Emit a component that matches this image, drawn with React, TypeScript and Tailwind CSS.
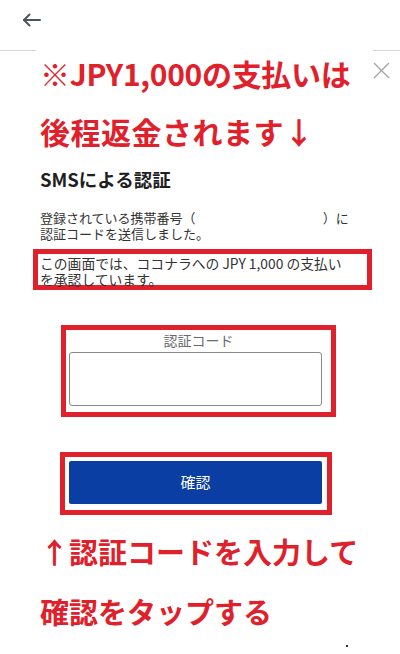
import React from "react";

const RED = "text-[#e0202a]";

export default function App() {
  return (
    <div className="w-[400px] h-[654px] bg-white overflow-hidden font-['Noto_Sans_CJK_JP','Noto_Sans',sans-serif] text-[#222]">
      {/* header */}
      <div className="h-[50px] pt-[13px] pl-[22px]">
        <svg width="19" height="14" viewBox="0 0 19 14" fill="none" stroke="#4b5560" strokeWidth="2" strokeLinecap="round" strokeLinejoin="round">
          <path d="M18 7H2" />
          <path d="M7.5 1.5 2 7l5.5 5.5" />
        </svg>
      </div>
      <div className="flex h-px">
        <div className="w-[36px] bg-[#d4d4d4]" />
        <div className="flex-1" />
        <div className="w-[27px] bg-[#d4d4d4]" />
      </div>

      {/* annotation top */}
      <div className="flex justify-between pl-[40px] pr-[10px]">
        <div className={`h-[44px] flex items-center text-[30px] font-bold tracking-[-0.3px] ${RED}`}>
          ※JPY1,000の支払いは
        </div>
        <svg className="mt-[11px]" width="17" height="17" viewBox="0 0 17 17" fill="none" stroke="#a3a3a3" strokeWidth="1.3">
          <path d="M1 1l15 15M16 1 1 16" />
        </svg>
      </div>
      <div className={`mt-[14px] h-[44px] pl-[40px] flex items-center text-[30px] font-bold tracking-[0.5px] ${RED}`}>
        後程返金されます↓
      </div>

      {/* heading */}
      <div className="mt-[14px] pl-[40px] text-[18.5px] leading-[24px] font-semibold text-[#1f1f1f]">
        SMSによる認証
      </div>

      {/* body */}
      <div className="mt-[19px] pl-[40px] text-[13px] leading-[16px] text-[#333]">
        <div className="flex">
          <span>登録されている携帯番号（</span>
          <span className="w-[127px]" />
          <span>）に</span>
        </div>
        <div>認証コードを送信しました。</div>
      </div>

      {/* red box 1 */}
      <div className="mt-[7px] ml-[33px] w-[339px] h-[41px] border-[5px] border-[#e0202a] pl-[2px] pt-[1px] text-[13.8px] leading-[16px] text-[#333]">
        <div className="whitespace-nowrap">この画面では、ココナラへの JPY 1,000 の支払い</div>
        <div>を承認しています。</div>
      </div>

      {/* auth code */}
      <div className="mt-[35px] ml-[61px] w-[275px] border-[5px] border-[#e0202a] pt-[1px] pb-[6px]">
        <div className="text-center text-[14px] leading-[18px] text-[#6b6b6b]">認証コード</div>
        <div className="mt-[3px] ml-[3px] w-[253px] h-[54px] border-[1.5px] border-[#8a8a8a] rounded-[3px]" />
      </div>

      {/* button */}
      <div className="mt-[35px] ml-[60px] w-[272px] h-[63px] border-[5px] border-[#e0202a] pt-[4px] pl-[4px]">
        <div className="w-[253px] h-[43px] bg-[#0a3ea3] rounded-[2px] flex items-center justify-center text-white text-[15px]">
          確認
        </div>
      </div>

      {/* annotation bottom */}
      <div className={`mt-[15px] h-[44px] pl-[40px] flex items-center text-[29px] font-bold ${RED}`}>
        ↑認証コードを入力して
      </div>
      <div className={`mt-[16px] h-[44px] pl-[40px] flex items-center text-[29px] font-bold ${RED}`}>
        確認をタップする
      </div>
      <div className="mt-[11px] ml-[346px] w-[2px] h-[2px] bg-[#333]" />
    </div>
  );
}
